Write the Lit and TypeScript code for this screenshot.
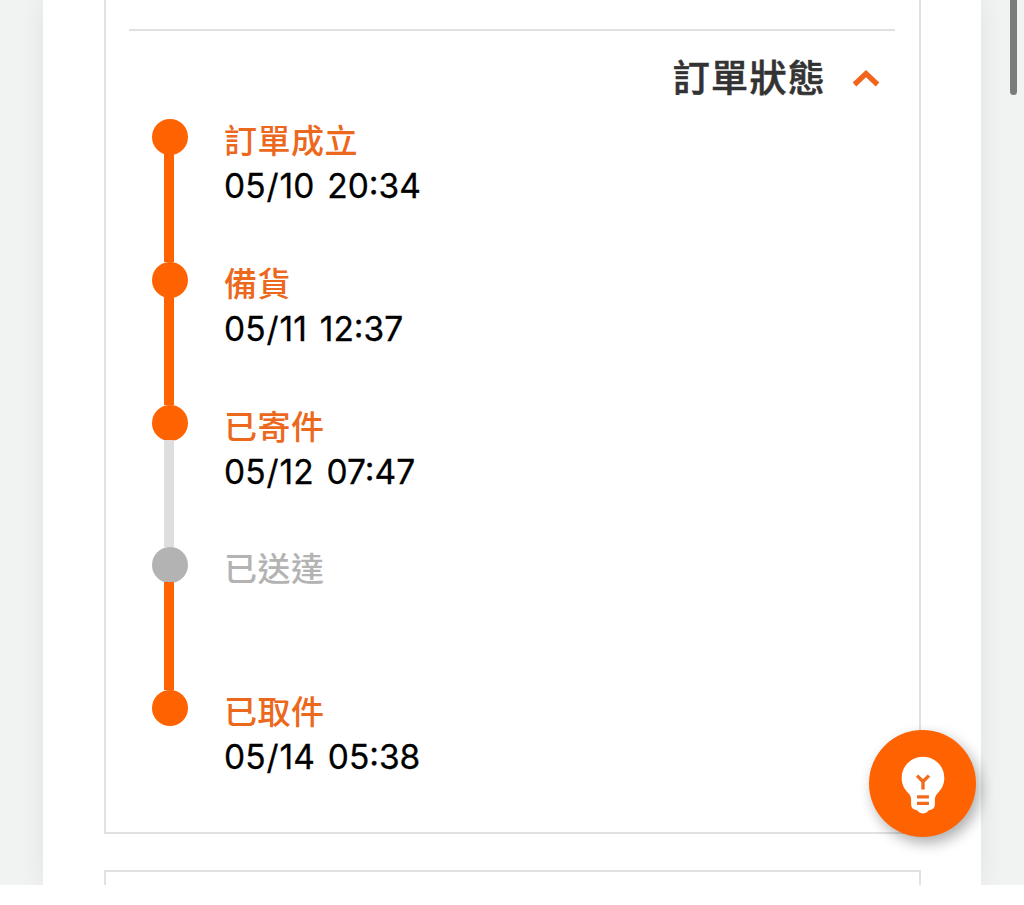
import { LitElement, html, css } from "lit";
import { customElement, property, state } from "lit/decorators.js";
import { classMap } from "lit/directives/class-map.js";

interface Step {
  label: string;
  time: string;
  done: boolean;
  // whether the line that leads to the next step is filled
  filled: boolean;
}

@customElement("order-timeline")
class OrderTimeline extends LitElement {
  @property({ type: Array }) steps: Step[] = [];

  static styles = css`
    :host {
      display: block;
    }
    .list {
      list-style: none;
      margin: 0;
      padding: 0;
    }
    .step {
      display: grid;
      grid-template-columns: 36px 1fr;
      column-gap: 36px;
      height: 142.75px;
    }
    .rail {
      display: flex;
      flex-direction: column;
      align-items: center;
    }
    .dot {
      flex: none;
      width: 36px;
      height: 36px;
      border-radius: 50%;
      background: #b3b3b3;
    }
    .line {
      flex: 1;
      width: 10px;
      margin: -1px 2px 0 0;
      background: #dedede;
    }
    .dot.done,
    .line.filled {
      background: #ff6200;
    }
    .label {
      padding-bottom: 4px;
      font-size: 33px;
      line-height: 40px;
      letter-spacing: 0.5px;
      font-weight: 500;
      color: #b3b3b3;
    }
    .label.done {
      color: #ec681c;
    }
    .time {
      font-family: Inter, "Noto Sans CJK TC", sans-serif;
      font-size: 33.5px;
      line-height: 46px;
      word-spacing: 3.5px;
      -webkit-text-stroke: 0.3px #000;
      color: #000;
      white-space: nowrap;
    }
    .slash {
      margin: 0 1px;
    }
  `;

  render() {
    return html`
      <ol class="list">
        ${this.steps.map(
          (step, i) => html`
            <li class="step">
              <div class="rail">
                <span class=${classMap({ dot: true, done: step.done })}></span>
                ${i < this.steps.length - 1
                  ? html`<span
                      class=${classMap({ line: true, filled: step.filled })}
                    ></span>`
                  : ""}
              </div>
              <div class="text">
                <div class=${classMap({ label: true, done: step.done })}>
                  ${step.label}
                </div>
                <div class="time">${this._time(step.time)}</div>
              </div>
            </li>
          `
        )}
      </ol>
    `;
  }

  _time(time: string) {
    if (!time) return "";
    const [month, rest] = time.split("/");
    return html`${month}<span class="slash">/</span>${rest}`;
  }
}

@customElement("app-root")
class AppRoot extends LitElement {
  @state() open = true;

  steps: Step[] = [
    { label: "訂單成立", time: "05/10 20:34", done: true, filled: true },
    { label: "備貨", time: "05/11 12:37", done: true, filled: true },
    { label: "已寄件", time: "05/12 07:47", done: true, filled: false },
    { label: "已送達", time: "", done: false, filled: true },
    { label: "已取件", time: "05/14 05:38", done: true, filled: false },
  ];

  static styles = css`
    :host {
      display: block;
      height: 905px;
      background: #fff;
      font-family: "Noto Sans CJK TC", sans-serif;
    }
    .viewport {
      position: relative;
      box-sizing: border-box;
      height: 885px;
      padding: 0 43px;
      overflow: hidden;
      background: #f0f3f2;
    }
    .page {
      box-sizing: border-box;
      height: 885px;
      padding: 0 60px 0 61px;
      background: #fff;
      box-shadow: 0 0 24px rgba(40, 0, 10, 0.07);
    }
    .card {
      box-sizing: border-box;
      border: 2px solid #e1e1e1;
    }
    .order {
      height: 834px;
      padding: 29px 24px 0 23px;
      border-top: none;
    }
    .next {
      height: 60px;
      margin-top: 36px;
    }
    .header {
      display: flex;
      box-sizing: border-box;
      align-items: center;
      justify-content: flex-end;
      gap: 26px;
      width: 100%;
      height: 90px;
      padding: 2px 15px 0 0;
      border: none;
      border-top: 2px solid #e1e1e1;
      background: none;
      font: inherit;
      cursor: pointer;
    }
    .title {
      font-size: 37px;
      line-height: 50px;
      letter-spacing: 1.3px;
      font-weight: 500;
      -webkit-text-stroke: 0.6px #333;
      color: #333;
    }
    .chevron {
      display: block;
      width: 28px;
      height: 20px;
      margin-top: 3px;
    }
    .chevron.closed {
      transform: rotate(180deg);
    }
    .timeline {
      padding-left: 23px;
    }
    .scrollbar {
      position: absolute;
      top: -60px;
      right: 7px;
      width: 7px;
      height: 155px;
      border-radius: 4px;
      background: #7b7b7b;
    }
    .tip {
      position: absolute;
      left: 869px;
      top: 730px;
      width: 107px;
      height: 107px;
      padding: 0;
      border: none;
      border-radius: 50%;
      background: #ff6200;
      box-shadow: 4px 6px 14px rgba(0, 0, 0, 0.32);
      cursor: pointer;
    }
    .bulb {
      display: block;
      width: 107px;
      height: 107px;
    }
  `;

  render() {
    return html`
      <div class="viewport">
        <main class="page">
          <section class="card order">
            <button class="header" @click=${this._toggle}>
              <span class="title">訂單狀態</span>
              <svg
                class=${classMap({ chevron: true, closed: !this.open })}
                viewBox="0 0 28 20"
                fill="none"
                stroke="#f26419"
                stroke-width="5.2"
              >
                <path d="M2.500 16.500 14 5.500l11.500 11" />
              </svg>
            </button>
            ${this.open
              ? html`<order-timeline
                  class="timeline"
                  .steps=${this.steps}
                ></order-timeline>`
              : ""}
          </section>
          <section class="card next"></section>
        </main>
        <div class="scrollbar"></div>
        <button class="tip" aria-label="tips">
          <svg class="bulb" viewBox="0 0 108 108" fill="none">
            <path
              fill="#fff"
              d="M54.500 27c-11.800 0-21.500 9.200-21.500 21.500 0 7 3 11.500 6.500 15 2 2 3 4 3 7v4.500c0 3 1.500 5 4 5.500 2 .4 2.500 1 3.500 2 2.500 2.300 6.500 2.300 9 0 1-1 1.500-1.600 3.500-2 2.500-.5 4-2.500 4-5.500v-4.500c0-3 1-5 3-7 3.500-3.500 6.500-8 6.500-15C76 36.200 66.300 27 54.500 27Z"
            />
            <path
              stroke="#f26a1b"
              stroke-width="3.400"
              d="m48.500 46 6 6 6-6M54.500 51v9M48.500 67.500h12M48.500 74h12"
            />
          </svg>
        </button>
      </div>
    `;
  }

  _toggle() {
    this.open = !this.open;
  }
}
